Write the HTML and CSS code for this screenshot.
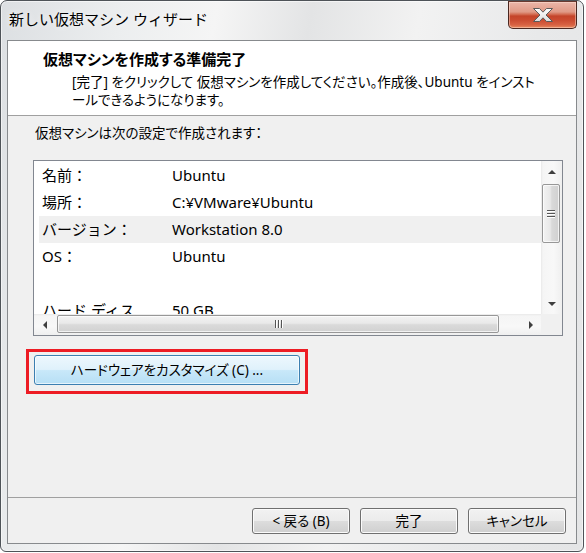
FILE: index.html
```html
<!DOCTYPE html>
<html lang="ja">
<head>
<meta charset="utf-8">
<title>新しい仮想マシン ウィザード</title>
<link rel="stylesheet" href="styles.css">
</head>
<body>
<div class="window">
  <div class="titlebar">
    <span class="title">新しい仮想マシン ウィザード</span>
    <button class="close" aria-label="閉じる">
      <svg width="22" height="16" viewBox="0 0 22 16">
        <defs>
          <linearGradient id="xg" x1="0" y1="0" x2="0" y2="1">
            <stop offset="0" stop-color="#ffffff"/>
            <stop offset="1" stop-color="#dcdcdc"/>
          </linearGradient>
        </defs>
        <polygon points="1.5,1.5 7.5,1.5 11,5.2 14.5,1.5 20.5,1.5 14,8 20.5,14.5 14.5,14.5 11,10.8 7.5,14.5 1.5,14.5 8,8" fill="url(#xg)" stroke="#5b5b5b" stroke-width="1" stroke-linejoin="round"/>
      </svg>
    </button>
  </div>
  <div class="client">
    <div class="header">
      <div class="heading">仮想マシンを作成する準備完了</div>
      <div class="desc">[完了] をクリックして 仮想マシンを作成してください。作成後、Ubuntu をインスト<br>ールできるようになります。</div>
    </div>
    <div class="body">
      <div class="intro">仮想マシンは次の設定で作成されます：</div>
      <div class="listbox">
        <div class="list-main">
          <div class="rows">
            <div class="row"><span class="label">名前：</span><span class="value">Ubuntu</span></div>
            <div class="row"><span class="label">場所：</span><span class="value">C:¥VMware¥Ubuntu</span></div>
            <div class="row alt"><span class="label">バージョン：</span><span class="value">Workstation 8.0</span></div>
            <div class="row"><span class="label">OS：</span><span class="value">Ubuntu</span></div>
            <div class="row"><span class="label"></span><span class="value"></span></div>
            <div class="row"><span class="label">ハード ディスク：</span><span class="value">50 GB</span></div>
          </div>
          <div class="vscroll">
            <div class="sb-btn"><span class="arr arr-up"></span></div>
            <div class="vtrack"><div class="vthumb"><span class="grip-v"></span></div></div>
            <div class="sb-btn"><span class="arr arr-down"></span></div>
          </div>
        </div>
        <div class="hscroll-row">
          <div class="hscroll">
            <div class="sb-btn"><span class="arr arr-left"></span></div>
            <div class="htrack"><div class="hthumb"><span class="grip-h"></span></div></div>
            <div class="sb-btn"><span class="arr arr-right"></span></div>
          </div>
          <div class="corner"></div>
        </div>
      </div>
      <div class="highlight">
        <button class="customize">ハードウェアをカスタマイズ (C) ...</button>
      </div>
    </div>
    <div class="footer">
      <button class="btn">&lt; 戻る (B)</button>
      <button class="btn">完了</button>
      <button class="btn">キャンセル</button>
    </div>
  </div>
</div>
</body>
</html>
```

FILE: styles.css
```css
* {
  box-sizing: border-box;
}

html, body {
  margin: 0;
  padding: 0;
  background: #ffffff;
}

body {
  font-family: "Noto Sans", "Noto Sans CJK JP", sans-serif;
  color: #000000;
}

button {
  font-family: "Noto Sans", "Noto Sans CJK JP", sans-serif;
  color: #000000;
  padding: 0;
  margin: 0;
  cursor: default;
}

.window {
  width: 584px;
  height: 552px;
  border: 1px solid #4e5358;
  border-radius: 7px 7px 6px 6px;
  background: linear-gradient(100deg, #dcdfe2 0%, #eceeef 18%, #f5f5f5 32%, #e3e4e5 46%, #f2f2f2 62%, #e8e9ea 80%, #e4e5e6 100%);
  box-shadow: inset 0 0 0 1px rgba(255, 255, 255, 0.55);
  padding: 0 6px 7px 6px;
  display: flex;
  flex-direction: column;
  overflow: hidden;
}

.titlebar {
  height: 39px;
  display: flex;
  align-items: flex-start;
  flex-shrink: 0;
}

.title {
  margin: 8px 0 0 2px;
  font-size: 15px;
  line-height: 20px;
  white-space: nowrap;
  text-shadow: 0 0 6px rgba(255, 255, 255, 0.9);
}

.close {
  margin-left: auto;
  width: 69px;
  height: 28px;
  border: 1px solid #4a2720;
  border-top-color: #6a3a30;
  border-radius: 0 0 5px 5px;
  background: linear-gradient(#ebb6a9 0%, #e09a87 38%, #d2694f 48%, #c4442a 54%, #cb4c31 70%, #d86243 88%, #e88a5e 100%);
  box-shadow: inset 0 0 0 1px rgba(255, 230, 220, 0.45);
  display: flex;
  align-items: center;
  justify-content: center;
}

.close svg {
  display: block;
}

.client {
  height: 504px;
  border: 1px solid #878a8d;
  background: #f0f0f0;
  display: flex;
  flex-direction: column;
}

.header {
  height: 75px;
  flex-shrink: 0;
  background: #ffffff;
  border-bottom: 1px solid #a0a0a0;
  padding: 8px 0 0 35px;
}

.heading {
  font-size: 15px;
  font-weight: bold;
  line-height: 20px;
  font-feature-settings: "palt";
  white-space: nowrap;
}

.desc {
  margin-top: 4px;
  padding-left: 29px;
  font-size: 13.5px;
  line-height: 18px;
  font-feature-settings: "palt";
  white-space: nowrap;
}

.body {
  flex: 1;
  padding-top: 8px;
  display: flex;
  flex-direction: column;
  align-items: flex-start;
}

.intro {
  padding-left: 27px;
  font-size: 13.5px;
  line-height: 18px;
  font-feature-settings: "palt";
  white-space: nowrap;
}

.listbox {
  margin: 18px 0 0 25px;
  width: 530px;
  height: 176px;
  border: 1px solid #828790;
  background: #ffffff;
  display: flex;
  flex-direction: column;
}

.list-main {
  flex: 1;
  display: flex;
  min-height: 0;
}

.rows {
  flex: 1;
  overflow: hidden;
  padding: 1px 0 0 5px;
}

.row {
  display: flex;
  align-items: flex-start;
  min-height: 27px;
  font-size: 15px;
  line-height: 27px;
}

.row.alt {
  background: #f0f0f0;
}

.label {
  width: 133px;
  flex-shrink: 0;
  padding: 0 36px 0 3px;
}

.value {
  white-space: nowrap;
}

.vscroll {
  width: 21px;
  flex-shrink: 0;
  display: flex;
  flex-direction: column;
  background: linear-gradient(90deg, #e9e9e9 0, #f5f5f5 2px, #f8f8f8 60%, #efefef 100%);
}

.sb-btn {
  width: 21px;
  height: 21px;
  flex-shrink: 0;
  display: flex;
  align-items: center;
  justify-content: center;
}

.arr {
  width: 0;
  height: 0;
  display: block;
}

.arr-up {
  border-left: 4px solid transparent;
  border-right: 4px solid transparent;
  border-bottom: 4px solid #3f3f3f;
  margin-top: 1px;
}

.arr-down {
  border-left: 4px solid transparent;
  border-right: 4px solid transparent;
  border-top: 4px solid #3f3f3f;
  margin-top: 1px;
}

.arr-left {
  border-top: 4px solid transparent;
  border-bottom: 4px solid transparent;
  border-right: 4px solid #3f3f3f;
}

.arr-right {
  border-top: 4px solid transparent;
  border-bottom: 4px solid transparent;
  border-left: 4px solid #3f3f3f;
}

.vtrack {
  flex: 1;
  padding: 2px 2px 0 1px;
}

.vthumb {
  height: 59px;
  border: 1px solid #979797;
  border-radius: 2px;
  background: linear-gradient(90deg, #f3f3f3 0%, #e8e8e8 45%, #d9d9d9 55%, #d0d0d0 100%);
  box-shadow: inset 0 0 0 1px rgba(255, 255, 255, 0.7);
  display: flex;
  align-items: center;
  justify-content: center;
}

.grip-v {
  width: 8px;
  height: 1px;
  background: #555555;
  box-shadow: 0 -3px 0 #555555, 0 3px 0 #555555, 0 1px 0 #ffffff, 0 -2px 0 #ffffff, 0 4px 0 #ffffff;
}

.hscroll-row {
  height: 21px;
  flex-shrink: 0;
  display: flex;
}

.hscroll {
  flex: 1;
  display: flex;
  background: linear-gradient(#e9e9e9 0, #f5f5f5 2px, #f8f8f8 60%, #efefef 100%);
}

.htrack {
  flex: 1;
  padding: 1px 0 2px 2px;
}

.hthumb {
  width: 442px;
  height: 100%;
  border: 1px solid #979797;
  border-radius: 2px;
  background: linear-gradient(#f3f3f3 0%, #e9e9e9 45%, #dadada 55%, #d1d1d1 100%);
  box-shadow: inset 0 0 0 1px rgba(255, 255, 255, 0.7);
  display: flex;
  align-items: center;
  justify-content: center;
}

.grip-h {
  width: 1px;
  height: 8px;
  background: #555555;
  box-shadow: -3px 0 0 #555555, 3px 0 0 #555555, 1px 0 0 #ffffff, -2px 0 0 #ffffff, 4px 0 0 #ffffff;
}

.corner {
  width: 21px;
  flex-shrink: 0;
  background: #f0f0f0;
}

.highlight {
  margin: 13px 0 0 18px;
  width: 282px;
  height: 45px;
  border: 3px solid #ed1c24;
  padding: 3px 5px 0 5px;
}

.customize {
  display: block;
  width: 266px;
  height: 30px;
  border: 1px solid #3c7fb1;
  border-radius: 3px;
  background: linear-gradient(#edf7fd 0%, #dff1fb 48%, #c8e8f9 52%, #b7dff5 100%);
  box-shadow: inset 0 0 0 1px rgba(255, 255, 255, 0.65);
  font-size: 13.5px;
  line-height: 28px;
  font-feature-settings: "palt";
  white-space: nowrap;
}

.footer {
  height: 46px;
  flex-shrink: 0;
  border-top: 1px solid #a0a0a0;
  padding: 10px 10px 0 0;
  display: flex;
  justify-content: flex-end;
  align-items: flex-start;
  gap: 10px;
}

.btn {
  width: 98px;
  height: 26px;
  border: 1px solid #707070;
  border-radius: 3px;
  background: linear-gradient(#f2f2f2 0%, #ebebeb 50%, #dddddd 50%, #cfcfcf 100%);
  box-shadow: inset 0 0 0 1px #fbfbfb;
  font-size: 13.5px;
  line-height: 24px;
  font-feature-settings: "palt";
  white-space: nowrap;
}
```
